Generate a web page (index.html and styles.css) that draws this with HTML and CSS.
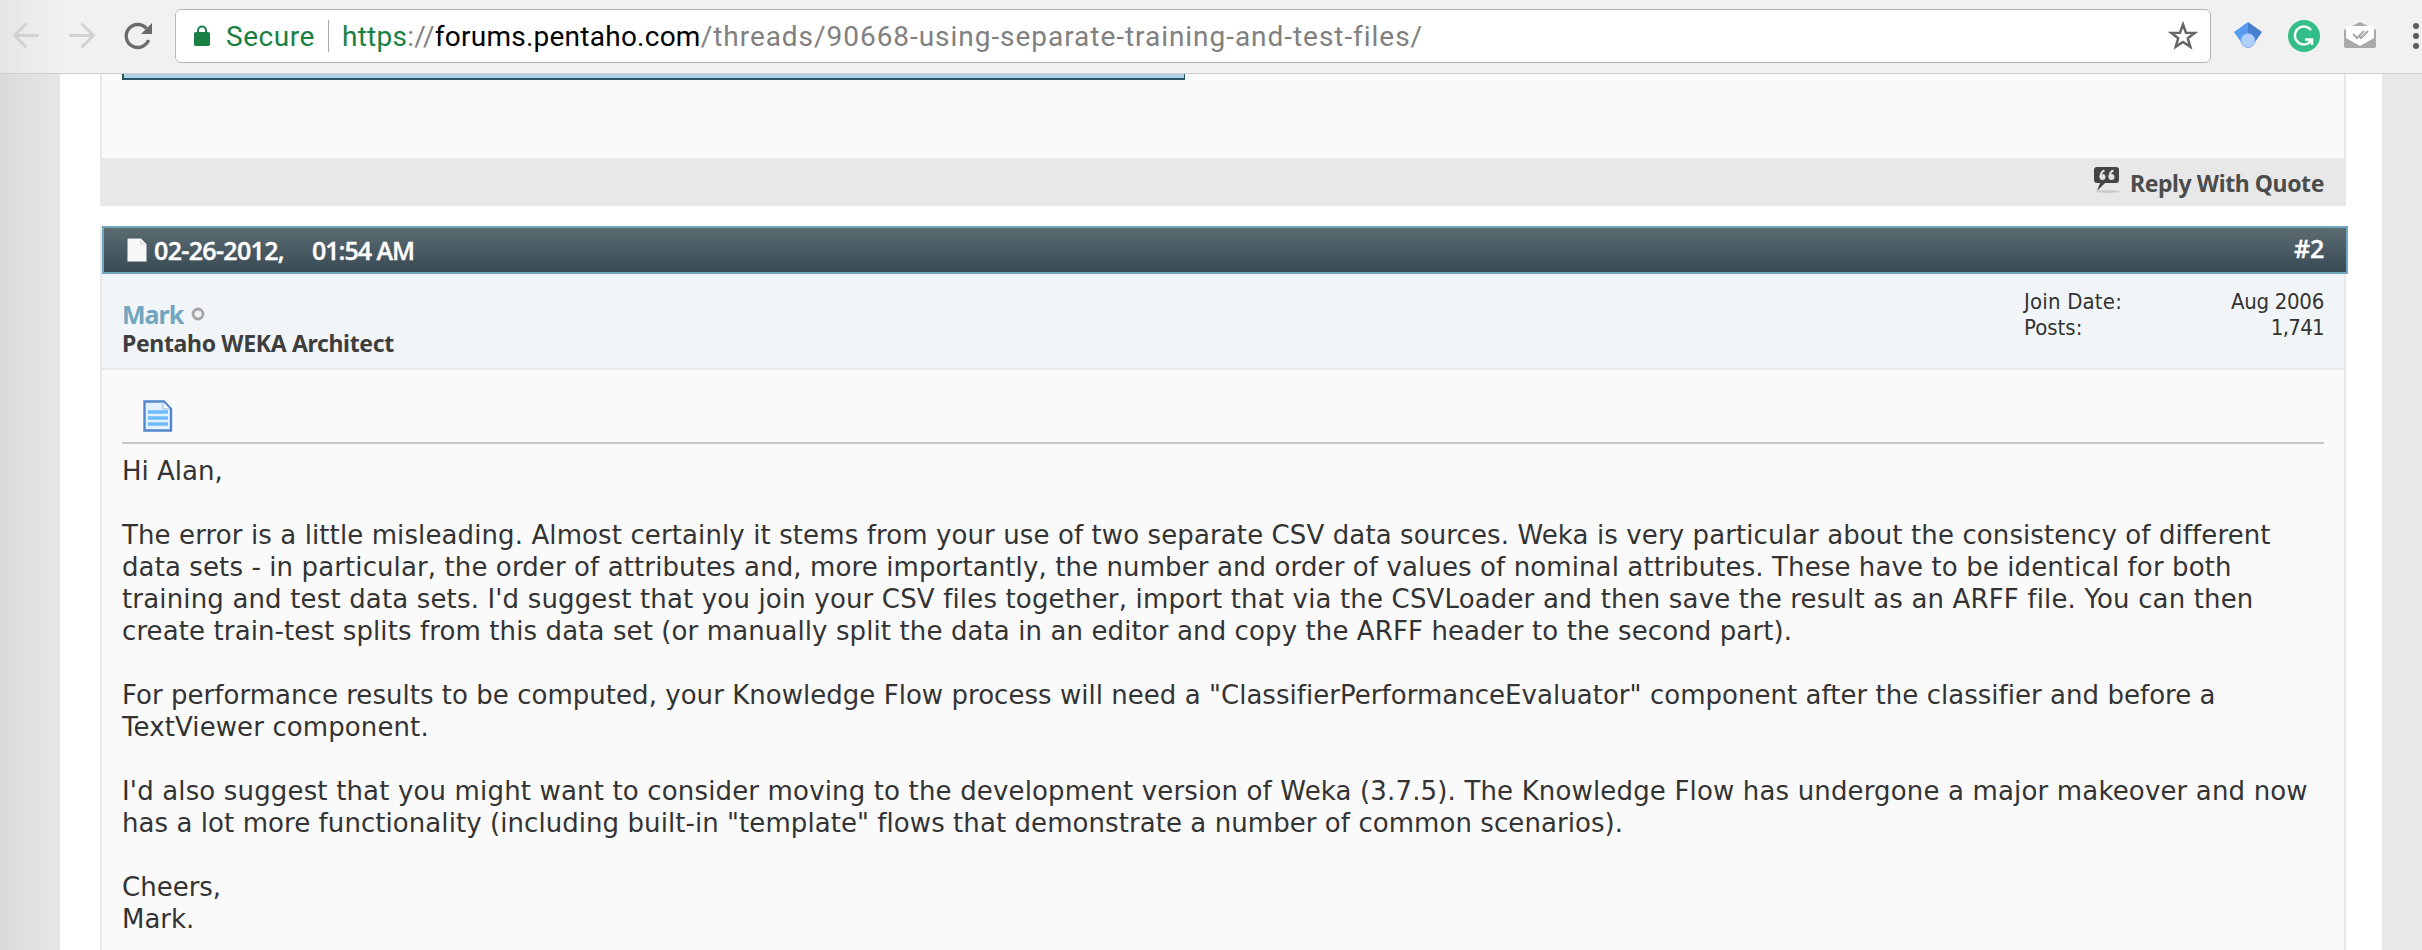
FILE: index.html
```
<!DOCTYPE html>
<html lang="en">
<head>
<meta charset="utf-8">
<title>Using separate training and test files</title>
<link rel="stylesheet" href="styles.css">
</head>
<body>
<header class="toolbar">
  <svg class="nav-icons" width="175" height="73" viewBox="0 0 175 73" fill="none">
    <g stroke="#d2d2d2" stroke-width="3" stroke-linecap="round"><path d="M37.500 35.500H14.500M25.500 24.500L14.500 35.500L25.500 46.500"/><path d="M70.500 35.500H93.500M82.500 24.500L93.500 35.500L82.500 46.500"/></g>
    <path d="M148.500 40A11.500 11.500 0 1 1 146.500 28.500" stroke="#6b6b6b" stroke-width="3.400"/><path d="M152 23V34H141Z" fill="#6b6b6b"/>
  </svg>
  <div class="address">
    <svg class="lock" width="16" height="22" viewBox="0 0 16 22"><path d="M4 9V5.500a4 4 0 0 1 8 0V9" fill="none" stroke="#188043" stroke-width="2"/><rect y="7" width="16" height="14" rx="1.800" fill="#188043"/></svg>
    <span class="secure">Secure</span>
    <span class="divider"></span>
    <span class="url"><span class="scheme">https</span><span class="dim">://</span><span class="host">forums.pentaho.com</span><span class="dim path">/threads/90668-using-separate-training-and-test-files/</span></span>
    <svg class="star" width="30" height="30" viewBox="0 0 30 30"><path d="M15 3.500L18 11.700L26.700 12L19.800 17.300L22.300 25.800L15 20.900L7.700 25.800L10.200 17.300L3.300 12L12 11.700Z" fill="none" stroke="#666" stroke-width="2.500"/></svg>
  </div>
  <svg class="extensions" width="211" height="73" viewBox="2211 0 211 73">
    <path d="M2234 32L2248 22V42H2241Z" fill="#579cf0"/><path d="M2248 22L2262 32L2255 42H2248Z" fill="#437fcd"/><circle cx="2248" cy="40.500" r="7" fill="#b0cffa" stroke="#84aef0"/>
    <circle cx="2304" cy="36" r="16" fill="#33bd87"/><path d="M2311 30A9 9 0 1 0 2308 43.500L2312 39.500M2305 39.500H2312V45" fill="none" stroke="#fff" stroke-width="2.500"/>
    <path d="M2344 30L2360 22L2376 30V46a2 2 0 0 1-2 2H2346a2 2 0 0 1-2-2Z" fill="#aaa"/><path d="M2346 28Q2346 26 2348 26H2372Q2374 26 2374 28V38L2360 46L2346 38Z" fill="#fff"/><path d="M2353 34L2357 38L2364 31M2359 36L2361 38L2368 31" fill="none" stroke="#aaa" stroke-width="2"/>
    <g fill="#5a5a5a"><circle cx="2416" cy="26" r="3"/><circle cx="2416" cy="36" r="3"/><circle cx="2416" cy="46" r="3"/></g>
  </svg>
</header>
<main class="page">
  <article class="post previous">
    <div class="code-edge"><div class="code-box"></div></div>
    <footer class="reply">
      <svg width="30" height="28" viewBox="0 0 30 28"><ellipse cx="16" cy="25.500" rx="12" ry="1.500" fill="#ccc"/><path d="M5 1H24Q27 1 27 4V14Q27 17 24 17H13L5 25L8 17H5Q2 17 2 14V4Q2 1 5 1Z" fill="#444"/><g fill="#e2e2e2"><circle cx="10.500" cy="11" r="3"/><circle cx="19.500" cy="11" r="3"/></g><path d="M8.500 11Q8.500 6 12.500 4.500M17.500 11Q17.500 6 21.500 4.500" fill="none" stroke="#e2e2e2" stroke-width="2"/></svg>
      <span class="reply-label">Reply With Quote</span>
    </footer>
  </article>
  <article class="post current">
    <div class="post-head">
      <svg width="22" height="26" viewBox="0 0 22 26"><path d="M1 1H15L21 7V25H1Z" fill="#f7f7f7" stroke="#4a5a60" stroke-width="1"/><path d="M14 2V8H20" fill="#e3e3e3"/></svg>
      <span class="date">02-26-2012,</span><span class="time">01:54 AM</span>
      <span class="number">#2</span>
    </div>
    <section class="author">
      <div class="who">
        <div class="name">Mark<svg width="14" height="14" viewBox="0 0 14 14"><circle cx="7" cy="7" r="5" fill="#eee" stroke="#a5a5a5" stroke-width="2.800"/></svg></div>
        <div class="role">Pentaho WEKA Architect</div>
      </div>
      <dl class="stats"><dt class="join">Join Date:</dt><dd class="joined">Aug 2006</dd><dt>Posts:</dt><dd class="count">1,741</dd></dl>
    </section>
    <section class="content">
      <div class="post-icon"><svg width="30" height="32" viewBox="0 0 30 32"><path d="M1.500 1.500H21L28 9V30.500H1.500Z" fill="#e4f1fe" stroke="#5387cb" stroke-width="2.400"/><path d="M20 2V9H27" fill="#fff" stroke="#8db4e2"/><path d="M5 12H25M5 18H25M5 24H25" stroke="#70bdfb" stroke-width="3.600"/></svg></div>
      <div class="message">
        <p class="even">Hi Alan,</p>
        <p>The error is a little misleading. Almost certainly it stems from your use of two separate CSV data sources. Weka is very particular about the consistency of different<br>data sets - in particular, the order of attributes and, more importantly, the number and order of values of nominal attributes. These have to be identical for both<br><span class="wide">training and test data sets. I'd suggest that you join your CSV files together, import that via the CSVLoader and then save the result as an ARFF file. You can then</span><br>create train-test splits from this data set (or manually split the data in an editor and copy the ARFF header to the second part).</p>
        <p><span class="tight">For performance results to be computed, your Knowledge Flow process will need a "ClassifierPerformanceEvaluator" component after the classifier and before a</span><br>TextViewer component.</p>
        <p><span class="wide">I'd also suggest that you might want to consider moving to the development version of Weka (3.7.5). The Knowledge Flow has undergone a major makeover and now</span><br><span class="near">has a lot more functionality (including built-in "template" flows that demonstrate a number of common scenarios).</span></p>
        <p class="even">Cheers,<br>Mark.</p>
      </div>
    </section>
  </article>
</main>
</body>
</html>
```
FILE: styles.css
```
* { box-sizing: border-box; }
body { margin: 0; height: 950px; overflow: hidden; font-family: "DejaVu Sans", sans-serif; color: #333; background: #e8e8e8; }
.toolbar { display: flex; height: 74px; border-bottom: 1px solid #cfcfcf; background: linear-gradient(90deg, #e5e5e5, #f1f1f1 60px); }
.nav-icons, .extensions { flex: none; }
.address { display: flex; flex: 1; align-items: center; height: 54px; margin-top: 9px; border: 1px solid #b5b5b5; border-radius: 6px; background: #fff; font: 28px/54px Roboto, sans-serif; }
.lock { margin-left: 18px; }
.secure { margin-left: 16px; padding-top: 2px; color: #188043; letter-spacing: .56px; }
.divider { width: 1px; height: 32px; margin: 0 13px; background: #aaa; }
.url { flex: 1; padding-top: 2px; white-space: nowrap; letter-spacing: .25px; }
.scheme { color: #188043; }
.dim { color: #808080; }
.host { color: #000; }
.path { letter-spacing: .96px; }
.star { margin-right: 12px; }
.page { display: flex; flex-direction: column; height: 876px; margin-right: 40px; padding: 0 34px 0 100px; background: linear-gradient(90deg, #dadada, #e7e7e7 60px, #fff 60px); }
.post { width: 2246px; border: solid #e8e8e8; border-width: 0 2px; background: #fafafa; }
.previous { flex: none; height: 132px; }
.code-edge { height: 84px; }
.code-box { width: 1063px; height: 6px; margin-left: 20px; border: solid #2c5467; border-width: 0 1px 2px 2px; background: #aed0e3; }
.reply { display: flex; align-items: center; justify-content: flex-end; height: 48px; padding-right: 20px; gap: 8px; background: #e8e8e8; color: #4c4c4c; font: bold 23px/48px "Noto Sans", sans-serif; }
.reply svg { margin-bottom: 4px; }
.reply-label { padding-top: 2px; letter-spacing: -.41px; }
.current { flex: 1; margin-top: 20px; }
.post-head { display: flex; align-items: center; width: 2246px; height: 48px; padding: 0 22px; border: 2px solid #70a6be; background: linear-gradient(#5c6b72, #384a54); color: #fff; font: 600 25px/44px "Open Sans", sans-serif; white-space: nowrap; -webkit-text-stroke: .4px #fff; }
.date { margin-left: 6px; letter-spacing: -.66px; }
.time { margin-left: 28px; letter-spacing: -1px; }
.number { margin: -5px 0 0 auto; letter-spacing: -.2px; }
.author { display: flex; justify-content: space-between; height: 96px; padding: 15px 20px 0; border-bottom: 2px solid #e8e8e8; background: #f2f5f8; }
.who { padding-top: 10px; font-family: "Noto Sans", sans-serif; font-weight: bold; }
.name { display: flex; align-items: center; height: 30px; gap: 8px; color: #70a6be; font-size: 25px; line-height: 30px; letter-spacing: -1px; }
.role { color: #3e3e3e; font-size: 23px; line-height: 28px; letter-spacing: -.34px; }
.stats { display: grid; grid-template-columns: auto auto; justify-content: space-between; align-content: start; width: 300px; margin: 0; font: 22px/26px "DejaVu Sans Condensed", sans-serif; }
.stats dd { margin: 0; text-align: right; }
.join { letter-spacing: .175px; }
.joined { letter-spacing: -.28px; }
.count { letter-spacing: -.7px; }
.content { padding: 0 20px; }
.post-icon { height: 74px; padding: 30px 0 0 21px; border-bottom: 2px solid #c8c8c8; }
.message { padding-top: 11px; font-size: 26px; line-height: 32px; letter-spacing: .105px; white-space: nowrap; }
.message p { margin: 0 0 32px; }
.wide { letter-spacing: .155px; }
.tight { letter-spacing: .034px; }
.near { letter-spacing: .066px; }
.message .even { letter-spacing: 0; }
```
